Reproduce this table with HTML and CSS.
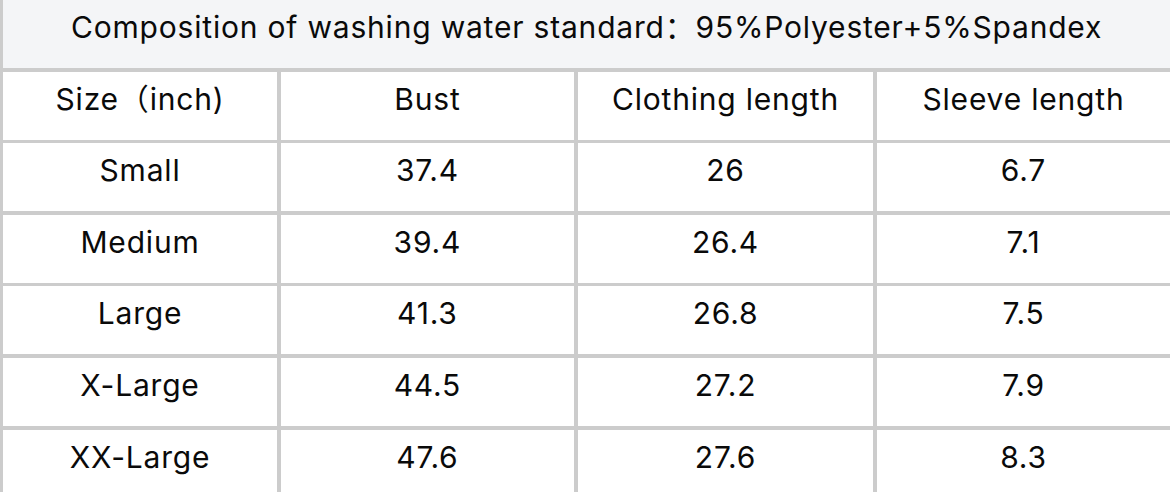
FILE: index.html
```html
<!DOCTYPE html>
<html lang="en">
<head>
<meta charset="utf-8">
<title>Size chart</title>
<link rel="stylesheet" href="styles.css">
</head>
<body>
<div class="chart">
  <div class="cell title">Composition of washing water standard：95%Polyester+5%Spandex</div>
  <div class="cell">Size（inch)</div>
  <div class="cell">Bust</div>
  <div class="cell">Clothing length</div>
  <div class="cell">Sleeve length</div>
  <div class="cell">Small</div>
  <div class="cell">37.4</div>
  <div class="cell">26</div>
  <div class="cell">6.7</div>
  <div class="cell">Medium</div>
  <div class="cell">39.4</div>
  <div class="cell">26.4</div>
  <div class="cell">7.1</div>
  <div class="cell">Large</div>
  <div class="cell">41.3</div>
  <div class="cell">26.8</div>
  <div class="cell">7.5</div>
  <div class="cell">X-Large</div>
  <div class="cell">44.5</div>
  <div class="cell">27.2</div>
  <div class="cell">7.9</div>
  <div class="cell">XX-Large</div>
  <div class="cell">47.6</div>
  <div class="cell">27.6</div>
  <div class="cell">8.3</div>
</div>
</body>
</html>
```
FILE: styles.css
```css
html, body {
  margin: 0;
  padding: 0;
  background: #ffffff;
  overflow: hidden;
}
.chart {
  width: 1173.6px;
  box-sizing: border-box;
  padding: 0 3.6px 3.6px 3px;
  background: #cccccc;
  display: grid;
  grid-template-columns: 274px 293.6px 295.4px 293.4px;
  grid-auto-rows: 68px;
  gap: 3.6px;
  font-family: Inter, "Noto Sans CJK SC", sans-serif;
  font-size: 30px;
  letter-spacing: 0.8px;
  color: #0a0a0a;
}
.cell {
  background: #ffffff;
  display: flex;
  justify-content: center;
  align-items: flex-start;
  padding-top: 12px;
  line-height: 1;
  box-sizing: border-box;
  white-space: nowrap;
}
.title {
  grid-column: 1 / -1;
  background: #f4f5f7;
}
```
